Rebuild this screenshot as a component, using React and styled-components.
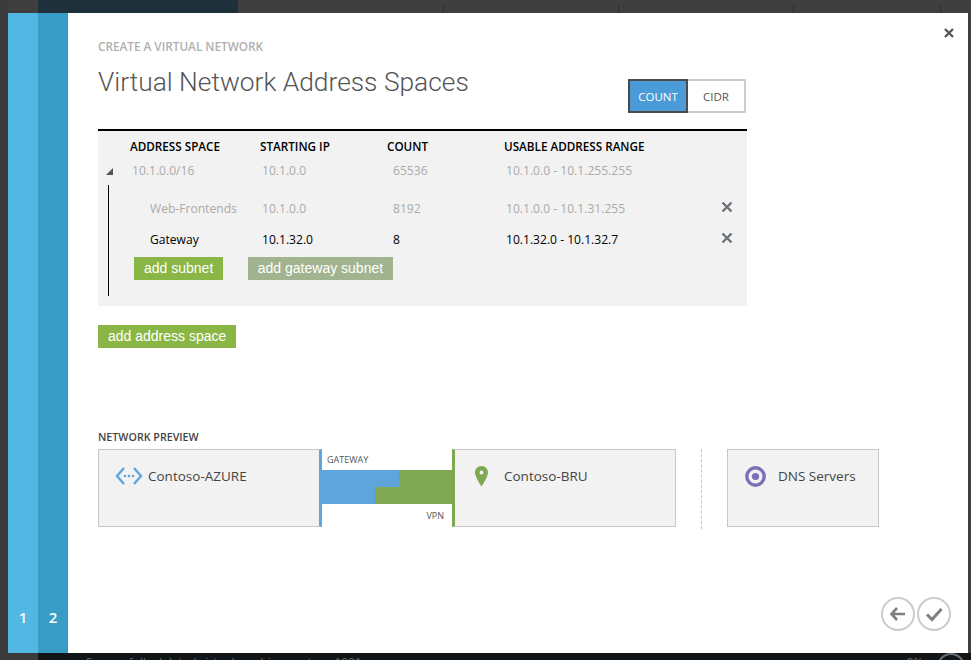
import React from 'react';
import styled, { createGlobalStyle } from 'styled-components';

const GlobalStyle = createGlobalStyle`
  html, body {
    margin: 0;
    padding: 0;
    background: #3f3f3f;
    overflow: hidden;
  }
  * { box-sizing: border-box; }
`;

const Page = styled.div`
  position: relative;
  width: 971px;
  height: 660px;
  overflow: hidden;
  display: grid;
  grid-template-columns: 38px 200px 1fr;
  grid-template-rows: 653px 7px;
  background: #3f3f3f;
  font-family: "Open Sans", "Noto Sans", sans-serif;
`;

const LeftStrip = styled.div`
  background: linear-gradient(90deg, #3a3a3a 0 8px, #3f3f3f 8px);
`;

const SideNav = styled.div`
  background: #1e303a;
`;

const TopColumns = styled.div`
  display: grid;
  grid-template-columns: 175px 175px 147px 1px;
  padding-left: 205px;
  align-items: start;
`;

const ColumnTick = styled.span`
  width: 1px;
  height: 13px;
  margin-top: 5px;
  background: #2e2e2e;
`;

const BottomLeft = styled.div`
  background: #3a3a3a;
`;

const BottomBar = styled.div`
  grid-column: 2 / 4;
  background: #111518;
  display: flex;
  justify-content: space-between;
  padding: 1px 6px 0 48px;
  color: #6a6f73;
  font-size: 11.6px;
  line-height: 16px;
  white-space: nowrap;
`;

const StatusText = styled.span`
  letter-spacing: 0.1px;
`;

const StatusDial = styled.div`
  display: flex;
  gap: 14px;
`;

const DialRing = styled.span`
  width: 28px;
  height: 28px;
  margin-top: -1px;
  border: 2px solid #6a6f73;
  border-radius: 50%;
`;

const Modal = styled.div`
  position: absolute;
  left: 8px;
  top: 13px;
  width: 960px;
  height: 640px;
  display: flex;
  background: #fff;
`;

const Step = styled.div`
  width: 30px;
  display: flex;
  align-items: flex-end;
  justify-content: center;
  padding-bottom: 26px;
  background: ${p => p.$dark ? '#379cc6' : '#52b7e3'};
  color: #fff;
  font-size: 15px;
  font-weight: 600;
  line-height: 20px;
`;

const Content = styled.div`
  position: relative;
  flex: 1;
  padding: 27px 0 0 30px;
`;

const CloseButton = styled.button`
  position: absolute;
  top: 14px;
  right: 13px;
  width: 12px;
  height: 12px;
  padding: 0;
  border: 0;
  background: none;
  color: #555;
  display: flex;
`;

const Eyebrow = styled.div`
  font-size: 11.75px;
  line-height: 13px;
  height: 14px;
  font-weight: 600;
  color: #b0b0b0;
`;

const TitleRow = styled.div`
  display: flex;
  justify-content: space-between;
  width: 648px;
  height: 75px;
`;

const Title = styled.h1`
  margin: 10px 0 0;
  font-family: Roboto, "Open Sans", sans-serif;
  font-size: 26.35px;
  line-height: 36px;
  font-weight: 300;
  color: #555;
`;

const Toggle = styled.div`
  display: flex;
  margin-top: 25px;
  height: 34px;
`;

const ToggleOption = styled.div`
  width: ${p => p.$active ? 60 : 58}px;
  display: flex;
  align-items: center;
  justify-content: center;
  font-size: 11.5px;
  border: 2px solid ${p => p.$active ? '#4a4a4a' : '#cccccc'};
  border-left-width: ${p => p.$active ? 2 : 0}px;
  background: ${p => p.$active ? '#4a9bd8' : '#fff'};
  color: ${p => p.$active ? '#fff' : '#555'};
`;

const Table = styled.div`
  width: 649px;
  height: 177px;
  border-top: 2px solid #000;
  background: #f2f2f2;
`;

const HeadRow = styled.div`
  display: grid;
  grid-template-columns: 32px 130px 127px 117px 1fr;
  height: 27px;
  align-items: center;
  padding-top: 2px;
  font-size: 11.7px;
  font-weight: 600;
  color: #000;
  white-space: nowrap;
`;

const SpaceRow = styled.div`
  display: grid;
  grid-template-columns: 32px 130px 127px 117px 1fr;
  height: 24px;
  align-items: center;
  font-size: 12.1px;
  color: #aaa;
  white-space: nowrap;
`;

const Cell = styled.div`
  padding-left: ${p => p.$indent || 2}px;
`;

const Caret = styled.div`
  justify-self: start;
  margin: 3px 0 0 8px;
  width: 0;
  height: 0;
  border-style: solid;
  border-width: 0 0 7px 7px;
  border-color: transparent transparent #555 transparent;
`;

const SubnetTree = styled.div`
  margin: 3px 0 0 10px;
  width: 639px;
  height: 111px;
  border-left: 1px solid #000;
  padding-top: 8px;
`;

const SubnetRow = styled.div`
  display: grid;
  grid-template-columns: 21px 130px 127px 117px 216px 1fr;
  height: 31px;
  align-items: center;
  font-size: 12.1px;
  color: ${p => p.$muted ? '#aaa' : '#000'};
  white-space: nowrap;
`;

const RemoveIcon = styled.svg`
  width: 12px;
  height: 12px;
  margin: -3px 0 0 1px;
  color: #6b7278;
`;

const SubnetActions = styled.div`
  display: flex;
  gap: 25px;
  padding-left: 25px;
  margin-top: 2px;
`;

const GreenButton = styled.button`
  height: 23px;
  padding: 0 ${p => p.$pad || 10}px;
  border: 0;
  background: ${p => p.$disabled ? '#a2b48f' : '#8ab645'};
  color: #fff;
  font-family: "Liberation Sans", Arial, sans-serif;
  font-size: 14px;
  line-height: 23px;
`;

const AddSpace = styled.div`
  margin-top: 18px;
  height: 106px;
`;

const SectionLabel = styled.div`
  font-size: 10.7px;
  line-height: 14px;
  font-weight: 600;
  color: #444;
  margin-bottom: 5px;
`;

const Preview = styled.div`
  display: flex;
  align-items: flex-start;
  height: 80px;
`;

const Card = styled.div`
  width: ${p => p.$width}px;
  height: 78px;
  display: flex;
  align-items: flex-start;
  padding: ${p => p.$pad};
  gap: ${p => p.$gap}px;
  background: #f2f2f2;
  border: 1px solid #c6c6c6;
  border-left: ${p => p.$leftAccent ? `3px solid ${p.$leftAccent}` : '1px solid #c6c6c6'};
  border-right: ${p => p.$rightAccent ? `3px solid ${p.$rightAccent}` : '1px solid #c6c6c6'};
  font-size: 13.5px;
  line-height: 21px;
  color: #444;
`;

const Link = styled.div`
  width: 130px;
  height: 78px;
  display: flex;
  flex-direction: column;
  font-size: 9px;
  line-height: 12px;
  color: #555;
`;

const LinkLabel = styled.div`
  height: ${p => p.$height}px;
  display: flex;
  align-items: center;
  padding: 0 8px 0 5px;
  justify-content: ${p => p.$right ? 'flex-end' : 'flex-start'};
`;

const LinkBar = styled.svg`
  display: block;
  width: 130px;
  height: 34px;
`;

const Divider = styled.div`
  width: 0;
  height: 80px;
  margin: 0 25px;
  border-left: 1px dashed #c6c6c6;
`;

const CardIcon = styled.svg`
  flex: none;
  display: block;
`;

const NavButtons = styled.div`
  position: absolute;
  right: 17px;
  bottom: 22px;
  display: flex;
  gap: 2px;
`;

const RoundButton = styled.button`
  width: 34px;
  height: 34px;
  padding: 0;
  border: 2px solid #cccccc;
  border-radius: 50%;
  background: #fff;
  color: #7f7f7f;
  display: flex;
  align-items: center;
  justify-content: center;
`;

function App() {
  return (
    <>
      <GlobalStyle />
      <Page>
        <LeftStrip />
        <SideNav />
        <TopColumns>
          <ColumnTick />
          <ColumnTick />
          <ColumnTick />
          <ColumnTick />
        </TopColumns>
        <BottomLeft />
        <BottomBar>
          <StatusText>Successfully deleted virtual machine contoso 1001</StatusText>
          <StatusDial>
            <span>0%</span>
            <DialRing />
          </StatusDial>
        </BottomBar>

        <Modal>
          <Step>1</Step>
          <Step $dark>2</Step>
          <Content>
            <CloseButton aria-label="Close">
              <svg width="12" height="12" viewBox="0 0 12 12">
                <path d="M2 2l8 8M10 2l-8 8" stroke="currentColor" strokeWidth="2.4" fill="none" />
              </svg>
            </CloseButton>

            <Eyebrow>CREATE A VIRTUAL NETWORK</Eyebrow>
            <TitleRow>
              <Title>Virtual Network Address Spaces</Title>
              <Toggle>
                <ToggleOption $active>COUNT</ToggleOption>
                <ToggleOption>CIDR</ToggleOption>
              </Toggle>
            </TitleRow>

            <Table>
              <HeadRow>
                <span />
                <span>ADDRESS SPACE</span>
                <span>STARTING IP</span>
                <span>COUNT</span>
                <span>USABLE ADDRESS RANGE</span>
              </HeadRow>
              <SpaceRow>
                <Caret />
                <Cell>10.1.0.0/16</Cell>
                <Cell>10.1.0.0</Cell>
                <Cell $indent={6}>65536</Cell>
                <Cell>10.1.0.0 - 10.1.255.255</Cell>
              </SpaceRow>
              <SubnetTree>
                <SubnetRow $muted>
                  <span />
                  <Cell $indent={20}>Web-Frontends</Cell>
                  <Cell>10.1.0.0</Cell>
                  <Cell $indent={6}>8192</Cell>
                  <Cell>10.1.0.0 - 10.1.31.255</Cell>
                  <RemoveIcon viewBox="0 0 12 12">
                    <path d="M1.5 1.5l9 9M10.5 1.5l-9 9" stroke="currentColor" strokeWidth="2.4" fill="none" />
                  </RemoveIcon>
                </SubnetRow>
                <SubnetRow>
                  <span />
                  <Cell $indent={20}>Gateway</Cell>
                  <Cell>10.1.32.0</Cell>
                  <Cell $indent={6}>8</Cell>
                  <Cell>10.1.32.0 - 10.1.32.7</Cell>
                  <RemoveIcon viewBox="0 0 12 12">
                    <path d="M1.5 1.5l9 9M10.5 1.5l-9 9" stroke="currentColor" strokeWidth="2.4" fill="none" />
                  </RemoveIcon>
                </SubnetRow>
                <SubnetActions>
                  <GreenButton>add subnet</GreenButton>
                  <GreenButton $disabled $pad={9.5}>add gateway subnet</GreenButton>
                </SubnetActions>
              </SubnetTree>
            </Table>

            <AddSpace>
              <GreenButton>add address space</GreenButton>
            </AddSpace>

            <SectionLabel>NETWORK PREVIEW</SectionLabel>
            <Preview>
              <Card $width={224} $pad="16px 0 0 16px" $gap={5} $rightAccent="#5fa5dc">
                <CardIcon width="28" height="20" viewBox="0 0 28 20">
                  <path d="M9 2L2 10l7 8M19 2l7 8-7 8" stroke="#5fa5dc" strokeWidth="2.4" fill="none" />
                  <circle cx="10" cy="10" r="1.3" fill="#5fa5dc" />
                  <circle cx="14" cy="10" r="1.3" fill="#5fa5dc" />
                  <circle cx="18" cy="10" r="1.3" fill="#5fa5dc" />
                </CardIcon>
                Contoso-AZURE
              </Card>
              <Link>
                <LinkLabel $height={21}>GATEWAY</LinkLabel>
                <LinkBar viewBox="0 0 130 34">
                  <rect width="130" height="34" fill="#80a853" />
                  <rect width="77" height="17" fill="#5fa5dc" />
                  <rect y="17" width="53" height="17" fill="#5fa5dc" />
                </LinkBar>
                <LinkLabel $height={23} $right>VPN</LinkLabel>
              </Link>
              <Card $width={224} $pad="16px 0 0 20px" $gap={16} $leftAccent="#80a853">
                <CardIcon width="13" height="21" viewBox="0 0 13 21">
                  <path fillRule="evenodd" d="M6.5 0C2.9 0 0 2.9 0 6.5c0 3.6 3.6 9.5 6.5 14 2.9-4.5 6.5-10.4 6.5-14C13 2.9 10.1 0 6.5 0zm0 4.6a1.9 1.9 0 110 3.8 1.9 1.9 0 010-3.8z" fill="#80a853" />
                </CardIcon>
                Contoso-BRU
              </Card>
              <Divider />
              <Card $width={152} $pad="16px 0 0 17px" $gap={12}>
                <CardIcon width="21" height="21" viewBox="0 0 21 21">
                  <circle cx="10.5" cy="10.5" r="8.7" stroke="#7a6fb8" strokeWidth="3.4" fill="none" />
                  <circle cx="10.5" cy="10.5" r="3.6" fill="#7a6fb8" />
                </CardIcon>
                DNS Servers
              </Card>
            </Preview>

            <NavButtons>
              <RoundButton aria-label="Back">
                <svg width="18" height="16" viewBox="0 0 18 16">
                  <path d="M8 2L2.5 8 8 14M3 8h13" stroke="currentColor" strokeWidth="2.6" fill="none" />
                </svg>
              </RoundButton>
              <RoundButton aria-label="Finish">
                <svg width="18" height="16" viewBox="0 0 18 16">
                  <path d="M2 8.5l5 5L16.5 3" stroke="currentColor" strokeWidth="3" fill="none" />
                </svg>
              </RoundButton>
            </NavButtons>
          </Content>
        </Modal>
      </Page>
    </>
  );
}

export default App;
